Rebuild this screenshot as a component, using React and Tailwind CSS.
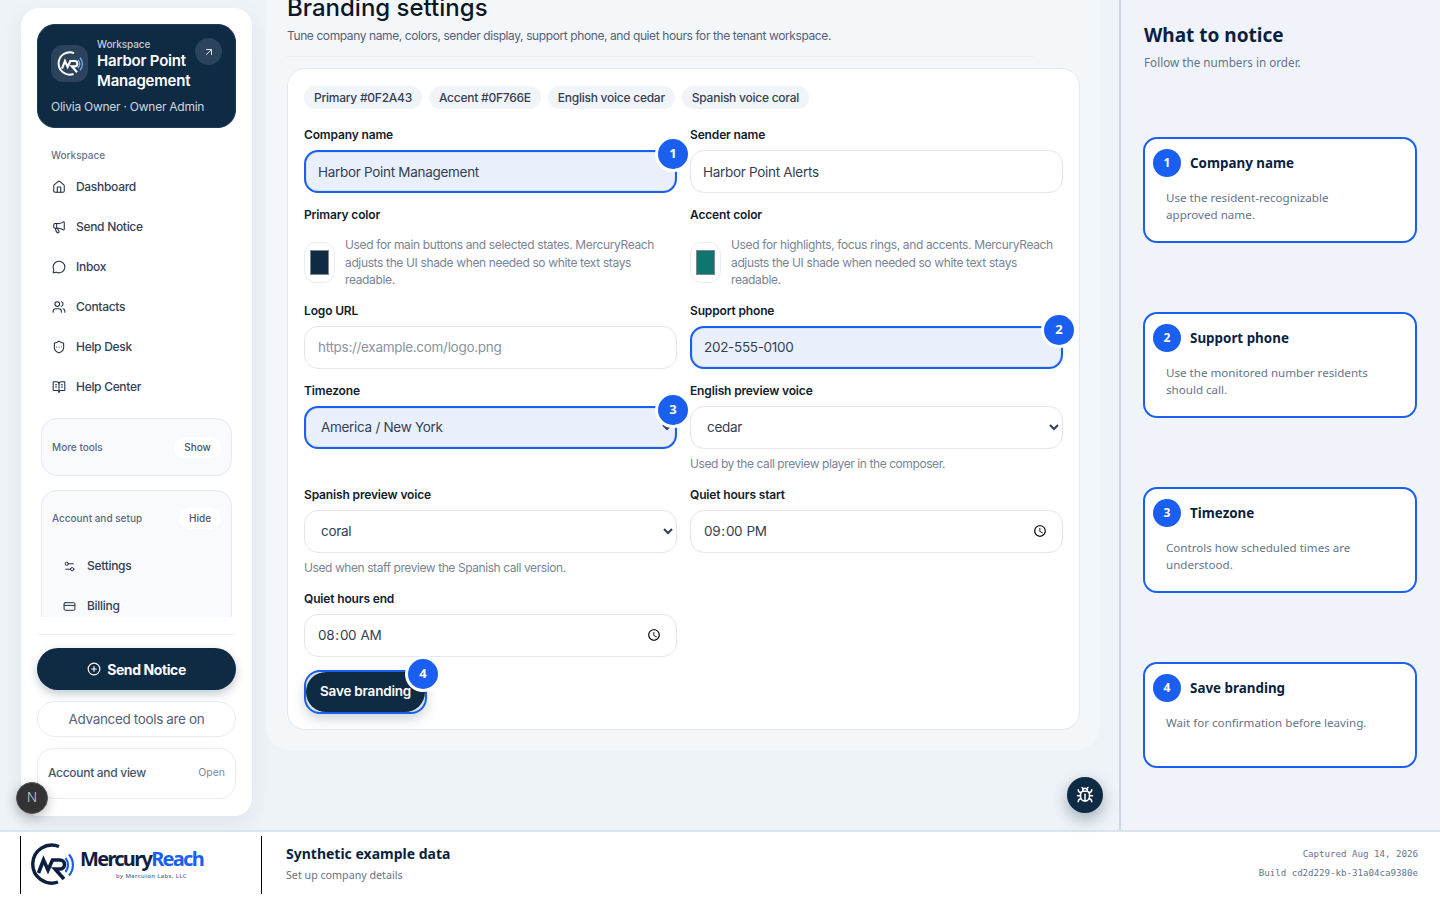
import {
  House,
  Megaphone,
  MessageCircle,
  Users,
  ShieldEllipsis,
  BookOpenText,
  Settings2,
  CreditCard,
  ArrowUpRight,
  CirclePlus,
  Bug,
} from 'lucide-react';

const navItems = [
  { label: 'Dashboard', icon: House },
  { label: 'Send Notice', icon: Megaphone },
  { label: 'Inbox', icon: MessageCircle },
  { label: 'Contacts', icon: Users },
  { label: 'Help Desk', icon: ShieldEllipsis },
  { label: 'Help Center', icon: BookOpenText },
];

const chips = ['Primary #0F2A43', 'Accent #0F766E', 'English voice cedar', 'Spanish voice coral'];

const steps = [
  { n: 1, title: 'Company name', text: 'Use the resident-recognizable approved name.' },
  { n: 2, title: 'Support phone', text: 'Use the monitored number residents should call.' },
  { n: 3, title: 'Timezone', text: 'Controls how scheduled times are understood.' },
  { n: 4, title: 'Save branding', text: 'Wait for confirmation before leaving.' },
];

const fieldBase = 'block w-full h-[43px] rounded-[14px] text-[13.5px] tracking-[-0.3px] text-[#334155] outline-none';
const fieldPlain = `${fieldBase} border border-[#e2e6ef] bg-white`;
const fieldMarked = `${fieldBase} border-2 border-[#1a5ff0] bg-[#e9f0fc] shadow-[inset_0_0_0_1px_#d9dfec]`;

function LogoMark({ size, ring, wave }) {
  return (
    <svg width={size} height={size} viewBox="0 0 44 44" fill="none" strokeLinecap="butt">
      <path d="M29 3.5A19 19 0 1 0 28 39" stroke={ring} strokeWidth="3.4" />
      <path
        d="M8.5 30 13.5 17 18 27 22.5 17H30a4.5 4.5 0 0 1 0 9h-5l9 10"
        stroke={ring}
        strokeWidth="3.6"
        strokeLinejoin="miter"
      />
      <path d="M35.5 15a11 11 0 0 1 0 14" stroke={wave} strokeWidth="2.2" />
      <path d="M39 11.5a16 16 0 0 1 0 21" stroke={wave} strokeWidth="2.2" />
    </svg>
  );
}

function Badge({ n }) {
  return (
    <span className="absolute -top-[11px] -right-[11px] flex size-[30px] items-center justify-center rounded-full bg-[#1a5ff0] text-[13px] font-bold text-white shadow-[0_0_0_3px_#ffffff] font-['Noto_Sans',sans-serif]">
      {n}
    </span>
  );
}

function Label({ children }) {
  return <div className="mb-[5px] h-[19px] text-[12px] leading-[17px] font-semibold tracking-[-0.15px] text-[#111c2e]">{children}</div>;
}

function Hint({ children }) {
  return <p className="mt-[6px] h-[18px] text-[12px] leading-[18px] tracking-[-0.42px] text-[#7a8494]">{children}</p>;
}

function ColorField({ label, color, text }) {
  return (
    <div>
      <div className="mb-[11px] h-[19px] text-[12px] leading-[17px] font-semibold tracking-[-0.15px] text-[#111c2e]">{label}</div>
      <div className="flex items-center gap-[10px]">
        <div className="flex h-[41px] w-[31px] shrink-0 items-center justify-center rounded-[12px] border border-[#e8ecf3] bg-white">
          <div className="h-[25px] w-[19px] border border-[#7d8791]" style={{ backgroundColor: color }} />
        </div>
        <p className="text-[12px] leading-[17.5px] tracking-[-0.36px] text-[#7a8494]">{text}</p>
      </div>
    </div>
  );
}

function Sidebar() {
  return (
    <aside className="mt-2 ml-[21px] flex h-[808px] w-[231px] shrink-0 flex-col rounded-[18px] bg-white p-4 shadow-[0_8px_24px_rgba(15,42,67,0.07)]">
      <div className="h-[104px] shrink-0 rounded-[18px] border border-[#1d3a55] bg-[#0f2a43] px-[13px] pt-[13px]">
        <div className="flex gap-[9px]">
          <div className="mt-[7px] flex size-[37px] shrink-0 items-center justify-center rounded-[12px] bg-[#2c445b]">
            <LogoMark size={26} ring="#ffffff" wave="#7ea8f5" />
          </div>
          <div className="min-w-0 flex-1 whitespace-nowrap">
            <div className="text-[10px] leading-[13px] font-medium tracking-[-0.1px] text-[#c0cad5]">Workspace</div>
            <div className="text-[15px] leading-[19.5px] font-semibold tracking-[-0.2px] text-white">
              Harbor Point
              <br />
              Management
            </div>
          </div>
          <div className="flex size-[27px] shrink-0 items-center justify-center rounded-full bg-[#2c445b]">
            <ArrowUpRight size={12} className="text-[#dfe5ec]" />
          </div>
        </div>
        <div className="mt-[8px] whitespace-nowrap text-[12px] leading-[18px] tracking-[-0.25px] text-[#cfd7e0]">
          Olivia Owner · Owner Admin
        </div>
      </div>

      <div className="h-[489px] shrink-0 overflow-hidden">
        <div className="mt-[19px] ml-[14px] mb-[4px] h-4 text-[10px] leading-4 font-medium text-[#64748b]">Workspace</div>
        <nav>
          {navItems.map((item) => (
            <div key={item.label} className="flex h-10 items-center gap-[10px] pl-[15px] text-[12px] font-medium tracking-[-0.3px] text-[#334155]">
              <item.icon size={14} strokeWidth={1.8} className="shrink-0 text-[#1f2d40]" />
              {item.label}
            </div>
          ))}
        </nav>
        <div className="mx-1 mt-[11px] flex h-[58px] items-center justify-between rounded-[16px] border border-[#e5e9f2] bg-[#f9fafd] px-[10px] text-[10px] font-medium text-[#5a6880]">
          More tools
          <span className="flex h-[21px] w-[47px] items-center justify-center rounded-full bg-white text-[#475569]">Show</span>
        </div>
        <div className="mx-1 mt-[14px] h-[200px] rounded-[16px] border border-[#e5e9f2] bg-[#f9fafd]">
          <div className="flex h-[55px] items-center justify-between px-[10px] text-[10px] font-medium text-[#5a6880]">
            Account and setup
            <span className="flex h-[21px] w-[42px] items-center justify-center rounded-full bg-white text-[#475569]">Hide</span>
          </div>
          <div className="flex h-10 items-center gap-[11px] pl-[21px] text-[12px] font-medium tracking-[-0.3px] text-[#334155]">
            <Settings2 size={13} strokeWidth={1.8} className="shrink-0 text-[#1f2d40]" />
            Settings
          </div>
          <div className="flex h-10 items-center gap-[11px] pl-[21px] text-[12px] font-medium tracking-[-0.3px] text-[#334155]">
            <CreditCard size={13} strokeWidth={1.8} className="shrink-0 text-[#1f2d40]" />
            Billing
          </div>
        </div>
      </div>

      <div className="mt-[17px] border-t border-[#eff2f6] pt-[13px]">
        <button className="flex h-[42px] w-full items-center justify-center gap-[6px] rounded-full bg-[#0f2a43] text-[14px] font-bold tracking-[-0.4px] text-white shadow-[0_4px_10px_rgba(15,42,67,0.25)]">
          <CirclePlus size={14} />
          Send Notice
        </button>
        <div className="mt-[11px] flex h-9 items-center justify-center rounded-full border border-[#e8ecf3] text-[13.5px] tracking-[-0.35px] text-[#55617a]">
          Advanced tools are on
        </div>
        <div className="mt-[11px] flex h-[51px] items-center justify-between rounded-[16px] border border-[#e8ecf3] px-[10px] pb-[1px] text-[12px] font-medium tracking-[-0.3px] text-[#475569]">
          Account and view
          <span className="text-[10.5px] font-normal tracking-normal text-[#7b8aa3]">Open</span>
        </div>
      </div>
    </aside>
  );
}

function BrandingForm() {
  return (
    <section className="ml-[14px] h-[750px] w-[834px] shrink-0 rounded-b-[24px] bg-[#f4f7f9] px-[21px]">
      <h1 className="-mt-[9px] h-[34px] text-[24px] leading-[34px] font-medium text-[#0b1626]">Branding settings</h1>
      <p className="mt-[1px] h-5 text-[12px] leading-5 tracking-[-0.4px] text-[#55617a]">
        Tune company name, colors, sender display, support phone, and quiet hours for the tenant workspace.
      </p>
      <div className="mt-[10px] mb-[11px] w-[746px] border-t border-[#e8ecf1]" />

      <div className="h-[662px] w-[793px] rounded-[18px] border border-[#e4e9f0] bg-white px-4 pt-[17px]">
        <div className="flex gap-[7px]">
          {chips.map((chip) => (
            <span key={chip} className="flex h-[23px] items-center rounded-full bg-[#f1f4f9] px-[10px] text-[12px] font-medium tracking-[-0.25px] text-[#334155]">
              {chip}
            </span>
          ))}
        </div>

        <div className="mt-[17px] grid grid-cols-[373px_373px] gap-x-[13px] gap-y-[13px]">
          <div>
            <Label>Company name</Label>
            <div className="relative">
              <input readOnly value="Harbor Point Management" className={`${fieldMarked} px-[12px]`} />
              <Badge n={1} />
            </div>
          </div>
          <div>
            <Label>Sender name</Label>
            <input readOnly value="Harbor Point Alerts" className={`${fieldPlain} px-[12px]`} />
          </div>

          <ColorField
            label="Primary color"
            color="#0f2a43"
            text="Used for main buttons and selected states. MercuryReach adjusts the UI shade when needed so white text stays readable."
          />
          <ColorField
            label="Accent color"
            color="#0f766e"
            text="Used for highlights, focus rings, and accents. MercuryReach adjusts the UI shade when needed so white text stays readable."
          />

          <div>
            <Label>Logo URL</Label>
            <input readOnly placeholder="https://example.com/logo.png" className={`${fieldPlain} px-[13px] placeholder:text-[#8a93a3]`} />
          </div>
          <div>
            <Label>Support phone</Label>
            <div className="relative">
              <input readOnly value="202-555-0100" className={`${fieldMarked} px-[12px]`} />
              <Badge n={2} />
            </div>
          </div>

          <div>
            <Label>Timezone</Label>
            <div className="relative">
              <select defaultValue="ny" className={`${fieldMarked} px-[11px]`}>
                <option value="ny">America / New York</option>
              </select>
              <Badge n={3} />
            </div>
          </div>
          <div>
            <Label>English preview voice</Label>
            <select defaultValue="cedar" className={`${fieldPlain} px-[12px]`}>
              <option value="cedar">cedar</option>
            </select>
            <Hint>Used by the call preview player in the composer.</Hint>
          </div>

          <div>
            <Label>Spanish preview voice</Label>
            <select defaultValue="coral" className={`${fieldPlain} px-[12px]`}>
              <option value="coral">coral</option>
            </select>
            <Hint>Used when staff preview the Spanish call version.</Hint>
          </div>
          <div>
            <Label>Quiet hours start</Label>
            <input type="time" defaultValue="21:00" className={`${fieldPlain} px-[12px]`} />
          </div>

          <div>
            <Label>Quiet hours end</Label>
            <input type="time" defaultValue="08:00" className={`${fieldPlain} px-[12px]`} />
          </div>
          <div />
        </div>

        <div className="relative mt-[13px] h-[44px] w-[123px]">
          <div className="h-full rounded-[16px] border-2 border-[#1a5ff0] bg-[#d9dfec] shadow-[0_6px_12px_rgba(15,42,67,0.18)]">
            <button className="flex h-full w-full items-center rounded-full bg-[#0f2a43] pl-[14px] text-[13.5px] font-semibold tracking-[-0.2px] text-white">
              Save branding
            </button>
          </div>
          <Badge n={4} />
        </div>
      </div>
    </section>
  );
}

function GuidePanel() {
  return (
    <aside className="w-[321px] shrink-0 border-l-2 border-[#c9d8e8] bg-[#f0f4fa] pt-[22px] pl-[23px] font-['Noto_Sans',sans-serif]">
      <h2 className="h-[26px] text-[19px] leading-[26px] font-bold text-[#0b1f3f]">What to notice</h2>
      <p className="mt-[5px] text-[11.7px] leading-[18px] text-[#64748b]">Follow the numbers in order.</p>
      <div className="-ml-px mt-[66px] flex flex-col gap-[69px]">
        {steps.map((step) => (
          <div key={step.n} className="h-[106px] w-[274px] rounded-[14px] border-2 border-[#1a5ff0] bg-white pt-[10px] pl-[8px]">
            <div className="flex items-center gap-[9px]">
              <span className="flex size-[28px] items-center justify-center rounded-full bg-[#1a5ff0] text-[12px] font-bold text-white">{step.n}</span>
              <span className="text-[13.4px] font-bold text-[#0b1f3f]">{step.title}</span>
            </div>
            <p className="mt-[12px] ml-[13px] w-[208px] text-[11.6px] leading-[17px] text-[#64748b]">{step.text}</p>
          </div>
        ))}
      </div>
    </aside>
  );
}

function Footer() {
  return (
    <footer className="flex h-[70px] items-center border-t-2 border-[#dbe3ec] bg-white pr-[22px] pb-[2px] pl-5">
      <div className="flex h-[58px] w-[242px] shrink-0 items-center border-r border-l border-black pl-[9px]">
        <LogoMark size={44} ring="#0b1f3f" wave="#1a5ff0" />
        <div className="ml-[6px] mt-[-3px] font-['Noto_Sans',sans-serif]">
          <div className="text-[20px] leading-[24px] font-bold tracking-[-1.7px] text-[#0b1f3f]">
            Mercury<span className="text-[#1a5ff0]">Reach</span>
          </div>
          <div className="mt-[1px] ml-[36px] text-[6px] leading-[8px] font-medium tracking-[0.35px] text-[#55617a]">by Mercuion Labs, LLC</div>
        </div>
      </div>
      <div className="ml-6 -mt-[3px] font-['Noto_Sans',sans-serif]">
        <div className="text-[14px] leading-5 font-bold text-[#0b1f3f]">Synthetic example data</div>
        <div className="mt-[3px] text-[10.7px] leading-4 text-[#64748b]">Set up company details</div>
      </div>
      <div className="ml-auto -mt-[2px] text-right font-['DejaVu_Sans_Mono',monospace] text-[9.15px] leading-[19px] text-[#64748b]">
        <div>Captured Aug 14, 2026</div>
        <div>Build cd2d229-kb-31a04ca9380e</div>
      </div>
    </footer>
  );
}

export default function App() {
  return (
    <div className="relative flex h-[900px] w-[1440px] flex-col overflow-hidden bg-[#eef3f7] font-[Inter,sans-serif]">
      <div className="flex h-[830px] shrink-0">
        <div className="flex flex-1 items-start">
          <Sidebar />
          <BrandingForm />
        </div>
        <GuidePanel />
      </div>
      <Footer />

      <div className="absolute top-[782px] left-[16px] flex size-8 items-center justify-center rounded-full border border-[#555] bg-[#333333] text-[13px] font-extralight text-white shadow-[0_4px_12px_rgba(0,0,0,0.25)]">
        N
      </div>
      <button className="absolute top-[777px] left-[1067px] flex size-9 items-center justify-center rounded-full bg-[#0f2a43] text-white shadow-[0_6px_16px_rgba(15,42,67,0.35)]">
        <Bug size={18} />
      </button>
    </div>
  );
}
